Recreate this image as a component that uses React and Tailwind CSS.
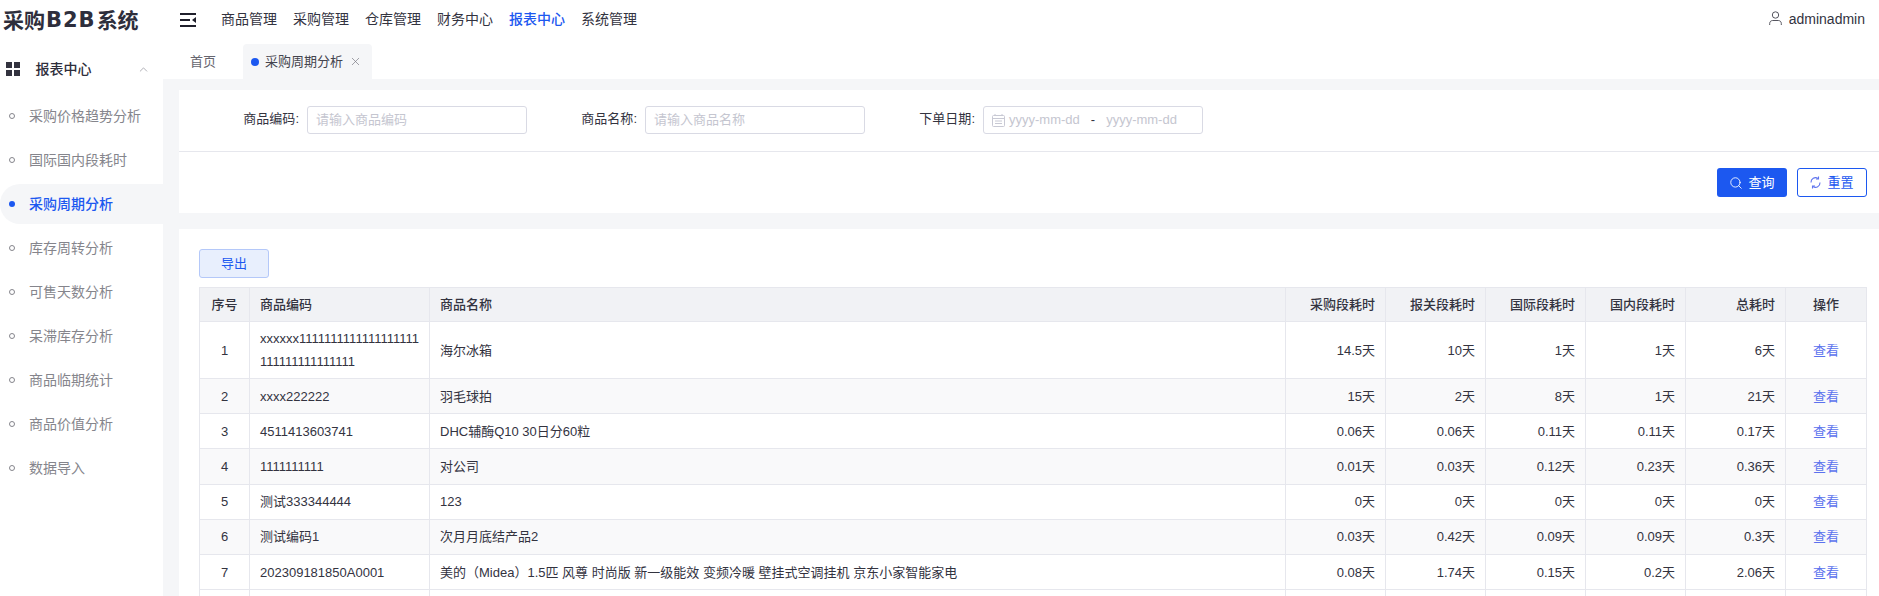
import { ChevronUp, Search, X } from "lucide-react";

const navItems = ["商品管理", "采购管理", "仓库管理", "财务中心", "报表中心", "系统管理"];

const sideItems = [
  "采购价格趋势分析",
  "国际国内段耗时",
  "采购周期分析",
  "库存周转分析",
  "可售天数分析",
  "呆滞库存分析",
  "商品临期统计",
  "商品价值分析",
  "数据导入",
];

const rows = [
  ["1", "xxxxxx1111111111111111111111111111111111", "海尔冰箱", "14.5天", "10天", "1天", "1天", "6天"],
  ["2", "xxxx222222", "羽毛球拍", "15天", "2天", "8天", "1天", "21天"],
  ["3", "4511413603741", "DHC辅酶Q10 30日分60粒", "0.06天", "0.06天", "0.11天", "0.11天", "0.17天"],
  ["4", "1111111111", "对公司", "0.01天", "0.03天", "0.12天", "0.23天", "0.36天"],
  ["5", "测试333344444", "123", "0天", "0天", "0天", "0天", "0天"],
  ["6", "测试编码1", "次月月底结产品2", "0.03天", "0.42天", "0.09天", "0.09天", "0.3天"],
  ["7", "202309181850A0001", "美的（Midea）1.5匹 风尊 时尚版 新一级能效 变频冷暖 壁挂式空调挂机 京东小家智能家电", "0.08天", "1.74天", "0.15天", "0.2天", "2.06天"],
];

const timeHeaders = ["采购段耗时", "报关段耗时", "国际段耗时", "国内段耗时", "总耗时"];

const MenuIcon = () => (
  <svg width="16" height="14" viewBox="0 0 16 14" fill="none">
    <path d="M0 1h16M0 7h10M0 13h16" stroke="#1f1f2b" strokeWidth="2" />
    <path d="M16 4v6l-4-3z" fill="#1f1f2b" />
  </svg>
);

const UserIcon = () => (
  <svg className="mb-[3px]" width="13" height="14" viewBox="0 0 13 14" fill="none" stroke="#55555f" strokeWidth="1">
    <circle cx="6.5" cy="4" r="3.2" />
    <path d="M0.7 14v-1.5c0-2 1.5-3 3-3h5.6c1.500 0 3 1 3 3V14" />
  </svg>
);

const CalendarIcon = () => (
  <svg width="13" height="13" viewBox="0 0 13 13" fill="none" stroke="#c8c9d4" strokeWidth="1">
    <rect x="0.5" y="1.500" width="12" height="11" rx="1" />
    <path d="M0.5 4.500h12M3 0v2M10 0v2M3 7h7M3 9.500h7" />
  </svg>
);

const RefreshIcon = () => (
  <svg width="11" height="13" viewBox="0 0 11 13" fill="none" stroke="#5f74ee" strokeWidth="1.100">
    <path d="M1 6.500a4.500 4.500 0 0 1 7-4" />
    <path d="M10 6.500a4.500 4.500 0 0 1-7 4" />
    <path d="M8.500 0.500v2.500H6M2.500 12.500V10H5" />
  </svg>
);

const FormItem = ({ label, children }) => (
  <div className="flex w-[338px] items-center">
    <label className="mb-[2px] w-[110px] shrink-0 text-right text-[13px] text-[#33333f]">{label}:</label>
    <div className="ml-2 flex h-[28px] w-[220px] items-center rounded-[3px] border border-[#d9dae4] bg-white px-2 text-[13px] text-[#c5c6d0]">
      {children}
    </div>
  </div>
);

const App = () => {
  return (
    <div className="flex h-[596px] w-[1879px] overflow-hidden bg-white text-[#33333f] [font-family:'Liberation_Sans','Noto_Sans_CJK_SC',sans-serif]">
      {/* Left Section */}
      <aside className="w-[163px] shrink-0">
        <div className="flex h-[44px] items-center pb-[3px] pl-[3px] text-[21px] font-bold leading-none text-[#2e2e3c]">
          采购<span className="px-[1px] tracking-[1px] [font-family:'DejaVu_Sans',sans-serif]">B2B</span>系统
        </div>
        <div className="flex h-[50px] items-center pl-[6px]">
          <div className="grid h-[14px] w-[14px] grid-cols-2 gap-[2px]">
            <span className="bg-[#33333f]" />
            <span className="bg-[#33333f]" />
            <span className="bg-[#33333f]" />
            <span className="bg-[#33333f]" />
          </div>
          <span className="ml-[15.500px] text-[14px] font-medium text-[#2e2e3c]">报表中心</span>
          <ChevronUp className="ml-[45px] text-[#8a8a94]" size={13} strokeWidth={1.250} />
        </div>
        <ul>
          {sideItems.map((item) => {
            const active = item === "采购周期分析";
            return (
              <li key={item} className="flex h-[44px] items-center">
                <div className={`flex h-[40px] w-full items-center rounded-l-[20px] pl-[9px] text-[14px] ${active ? "bg-[#f5f6f8] font-medium text-[#1c58f0]" : "text-[#85858c]"}`}>
                  <span className={`h-[6px] w-[6px] shrink-0 rounded-full ${active ? "bg-[#1c58f0]" : "border border-[#85858c]"}`} />
                  <span className="ml-[14px]">{item}</span>
                </div>
              </li>
            );
          })}
        </ul>
      </aside>

      <main className="flex min-w-0 flex-1 flex-col">
        <header className="flex h-[44px] shrink-0 items-center pb-[5px] pl-[17px] pr-[14px]">
          <MenuIcon />
          <nav className="ml-[25px] flex gap-4 text-[14px]">
            {navItems.map((item) => (
              <a key={item} className={item === "报表中心" ? "font-medium text-[#1c58f0]" : "text-[#33333f]"}>
                {item}
              </a>
            ))}
          </nav>
          <div className="ml-auto flex items-center gap-[7px] text-[14px]">
            <UserIcon />
            <span>adminadmin</span>
          </div>
        </header>

        <div className="flex h-[35px] shrink-0 text-[13px]">
          <div className="flex w-[80px] items-center pl-[27px] text-[#66666f]">首页</div>
          <div className="flex w-[129px] items-center rounded-t-[4px] bg-[#f5f6f8] pl-[8px]">
            <span className="h-[8px] w-[8px] rounded-full bg-[#1c58f0]" />
            <span className="ml-[6px] text-[#44444e]">采购周期分析</span>
            <X className="ml-[6px] text-[#77777f]" size={13} strokeWidth={1.250} />
          </div>
        </div>

        <div className="min-h-0 flex-1 overflow-hidden bg-[#f5f6f8] pl-4 pt-[11px]">
          <section className="bg-white">
            <div className="flex h-[62px] items-start border-b border-[#e6e7ed] pl-[10px] pt-[16px]">
              <FormItem label="商品编码">请输入商品编码</FormItem>
              <FormItem label="商品名称">请输入商品名称</FormItem>
              <FormItem label="下单日期">
                <CalendarIcon />
                <span className="ml-[4px]">yyyy-mm-dd</span>
                <span className="mx-[11px] text-[#33333f]">-</span>
                <span>yyyy-mm-dd</span>
              </FormItem>
            </div>
            <div className="flex h-[61px] items-start justify-end gap-[10px] pr-3 pt-[16px] text-[13px]">
              <button className="flex h-[29px] w-[70px] items-center justify-center gap-[5px] rounded-[3px] bg-[#1c58f0] text-white">
                <Search size={14} strokeWidth={1.500} />
                查询
              </button>
              <button className="flex h-[29px] w-[70px] items-center justify-center gap-[6px] rounded-[3px] border border-[#1c58f0] bg-white text-[#1c58f0]">
                <RefreshIcon />
                重置
              </button>
            </div>
          </section>

          <section className="mt-4 bg-white pl-5 pr-3 pt-5">
            <button className="block h-[29px] w-[70px] rounded-[3px] border border-[#b4c8f9] bg-[#e8effd] text-[13px] text-[#1c58f0]">
              导出
            </button>
            <table className="mt-[9px] w-[1668px] table-fixed border-collapse text-[13px] leading-[23px]">
              <colgroup>
                <col className="w-[50px]" />
                <col className="w-[180px]" />
                <col />
                <col className="w-[100px]" />
                <col className="w-[100px]" />
                <col className="w-[100px]" />
                <col className="w-[100px]" />
                <col className="w-[100px]" />
                <col className="w-[81px]" />
              </colgroup>
              <thead>
                <tr className="h-[34px] bg-[#f1f2f5] text-[#33333f]">
                  <th className="border border-[#e6e7ed] text-center font-medium">序号</th>
                  <th className="border border-[#e6e7ed] px-[10px] text-left font-medium">商品编码</th>
                  <th className="border border-[#e6e7ed] px-[10px] text-left font-medium">商品名称</th>
                  {timeHeaders.map((h) => (
                    <th key={h} className="border border-[#e6e7ed] px-[10px] text-right font-medium">{h}</th>
                  ))}
                  <th className="border border-[#e6e7ed] text-center font-medium">操作</th>
                </tr>
              </thead>
              <tbody>
                {rows.map((row, i) => (
                  <tr key={row[0]} className={`${i === 0 ? "h-[57px]" : "h-[35.200px]"} ${i % 2 === 1 ? "bg-[#f9f9fa]" : "bg-white"}`}>
                    <td className="border border-[#e6e7ed] text-center">{row[0]}</td>
                    <td className="border border-[#e6e7ed] px-[10px] [overflow-wrap:anywhere]">{row[1]}</td>
                    <td className="border border-[#e6e7ed] px-[10px]">{row[2]}</td>
                    {row.slice(3).map((v, j) => (
                      <td key={j} className="border border-[#e6e7ed] px-[10px] text-right">{v}</td>
                    ))}
                    <td className="border border-[#e6e7ed] text-center text-[#5b72ee]">查看</td>
                  </tr>
                ))}
                <tr className="h-[35px] bg-white">
                  {[0, 1, 2, 3, 4, 5, 6, 7, 8].map((c) => (
                    <td key={c} className="border border-[#e6e7ed]" />
                  ))}
                </tr>
              </tbody>
            </table>
          </section>
        </div>
      </main>
    </div>
  );
};

export default App;
